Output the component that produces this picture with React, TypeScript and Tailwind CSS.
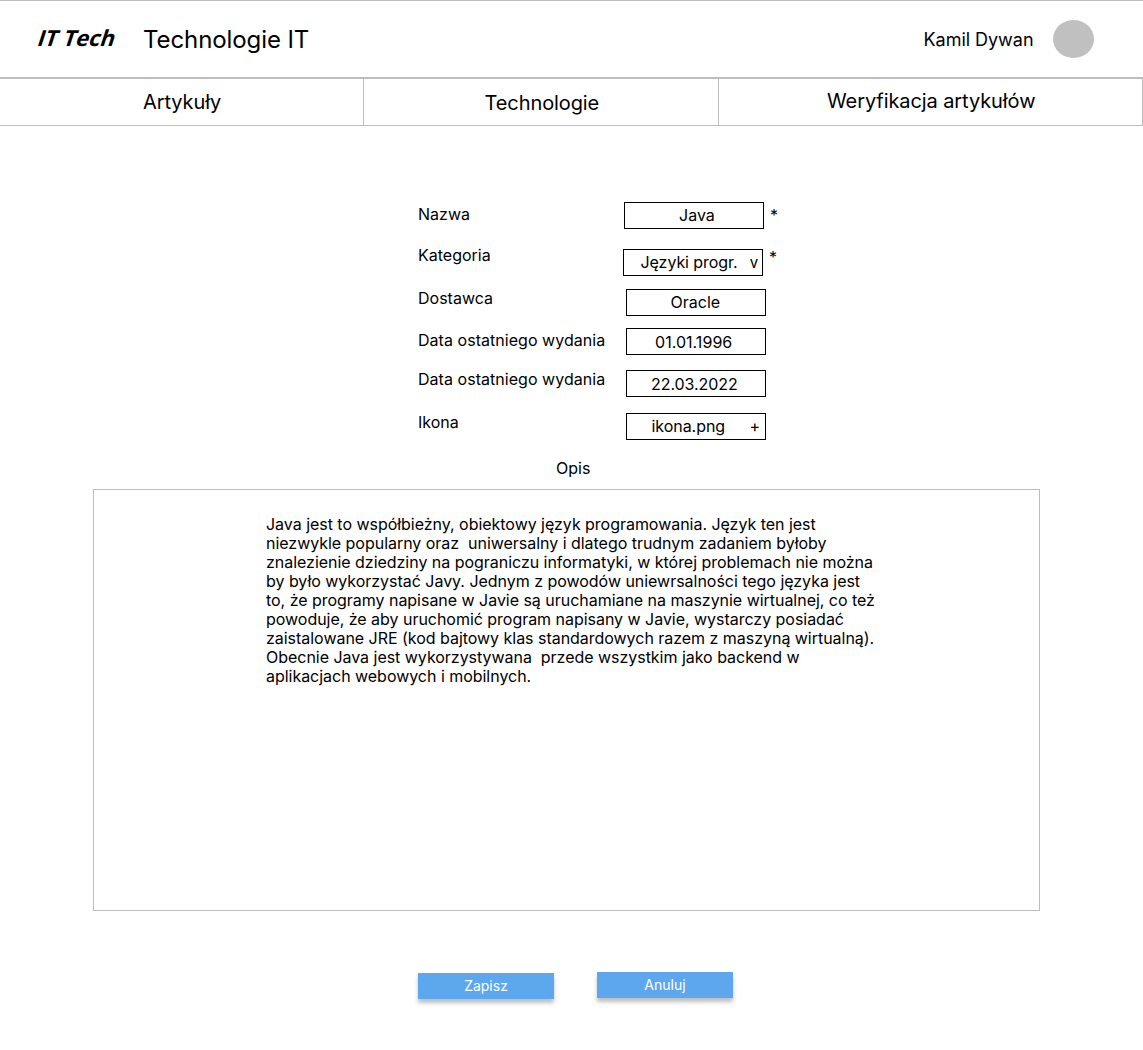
const fields = [
  { label: "Nazwa", value: "Java", row: "h-[47px]", labelPos: "mt-[3px]", box: "ml-[206px]", text: "pt-[3px] pl-[54px]", required: "mt-1" },
  { label: "Kategoria", value: "Języki progr.", row: "h-10", labelPos: "-mt-[3px]", box: "ml-[205px]", text: "pt-[3px] pl-[16.5px] tracking-[-0.06px]", required: "-mt-px", mark: "v" },
  { label: "Dostawca", value: "Oracle", row: "h-[39px]", labelPos: "", box: "ml-[208px]", text: "pt-[3px] pl-[43.5px]" },
  { label: "Data ostatniego wydania", value: "01.01.1996", row: "h-[42px]", labelPos: "mt-[3px] tracking-[0.04px]", box: "ml-[208px]", text: "pt-[4px] pl-[28px] tracking-[0.04px]" },
  { label: "Data ostatniego wydania", value: "22.03.2022", row: "h-[43px]", labelPos: "tracking-[0.04px]", box: "ml-[208px]", text: "pt-[4px] pl-[24px] tracking-[-0.06px]" },
  { label: "Ikona", value: "ikona.png", row: "h-[46px]", labelPos: "", box: "ml-[208px]", text: "pt-[3px] pl-[24.5px] tracking-[-0.05px]", mark: "+" },
];

const description = [
  "Java jest to współbieżny, obiektowy język programowania. Język ten jest",
  "niezwykle popularny oraz  uniwersalny i dlatego trudnym zadaniem byłoby",
  "znalezienie dziedziny na pograniczu informatyki, w której problemach nie można",
  "by było wykorzystać Javy. Jednym z powodów uniewrsalności tego języka jest",
  "to, że programy napisane w Javie są uruchamiane na maszynie wirtualnej, co też",
  "powoduje, że aby uruchomić program napisany w Javie, wystarczy posiadać",
  "zaistalowane JRE (kod bajtowy klas standardowych razem z maszyną wirtualną).",
  "Obecnie Java jest wykorzystywana  przede wszystkim jako backend w",
  "aplikacjach webowych i mobilnych.",
].join("\n");

function Header() {
  return (
    <header className="flex h-[79px] border-t border-b-2 border-[#bdbdbd]">
      <div className="mt-[21px] ml-[39px] w-[104px] font-['Open_Sans'] text-[22px] leading-[30px] font-bold whitespace-nowrap">
        <span className="inline-block -skew-x-[18deg]">IT Tech</span>
      </div>
      <h1 className="mt-6 text-2xl leading-[29px] tracking-[-0.09px] whitespace-nowrap">Technologie IT</h1>
      <div className="mt-7 ml-auto text-lg leading-[22px] tracking-[-0.03px] whitespace-nowrap">Kamil Dywan</div>
      <div className="mt-[19px] mr-[49px] ml-[19.5px] h-[38px] w-[41px] rounded-[50%] bg-[#c0c0c0]" />
    </header>
  );
}

function Nav() {
  return (
    <nav className="flex h-[47px] border-b border-[#bdbdbd] text-xl leading-6 tracking-[-0.09px]">
      <a className="w-[364px] border-r border-[#bdbdbd] pt-[11px] pl-[143px]">Artykuły</a>
      <a className="w-[355px] border-r border-[#bdbdbd] pt-3 pl-[120.5px]">Technologie</a>
      <a className="flex-1 border-r border-[#bdbdbd] pt-[10px] pl-[108px]">Weryfikacja artykułów</a>
    </nav>
  );
}

export default function App() {
  return (
    <div className="h-[1050px] overflow-hidden bg-white font-['Inter',sans-serif] text-base leading-[19px] text-black">
      <Header />
      <Nav />
      <main>
        <form className="mt-[76px] ml-[418px]">
          {fields.map((f, i) => (
            <div key={i} className={`flex items-start ${f.row}`}>
              <label className={`w-0 whitespace-nowrap ${f.labelPos}`}>{f.label}</label>
              <div className={`flex h-[27px] w-[140px] justify-between border border-black pr-1 whitespace-nowrap ${f.box} ${f.text}`}>
                <span>{f.value}</span>
                {f.mark && <span className={f.mark === "+" ? "mr-px" : "text-[15px] leading-[20px]"}>{f.mark}</span>}
              </div>
              {f.required && <span className={`ml-1.5 ${f.required}`}>*</span>}
            </div>
          ))}
        </form>
        <h2 className="ml-[556px] h-[30px]">Opis</h2>
        <section className="ml-[93px] h-[422px] w-[947px] border border-[#bdbdbd] pt-[25px] pl-[172px]">
          <p className="tracking-[-0.03px] whitespace-pre">{description}</p>
        </section>
        <div className="mt-[61px] ml-[418px] flex gap-[43px] text-sm leading-[17px] text-white">
          <button className="mt-px h-[26px] w-[136px] bg-[#5ca7ee] pb-0.5 shadow-[0_4px_4px_rgba(0,0,0,0.25)]">Zapisz</button>
          <button className="h-[26px] w-[136px] bg-[#5ca7ee] pb-0.5 shadow-[0_4px_4px_rgba(0,0,0,0.25)]">Anuluj</button>
        </div>
      </main>
    </div>
  );
}
